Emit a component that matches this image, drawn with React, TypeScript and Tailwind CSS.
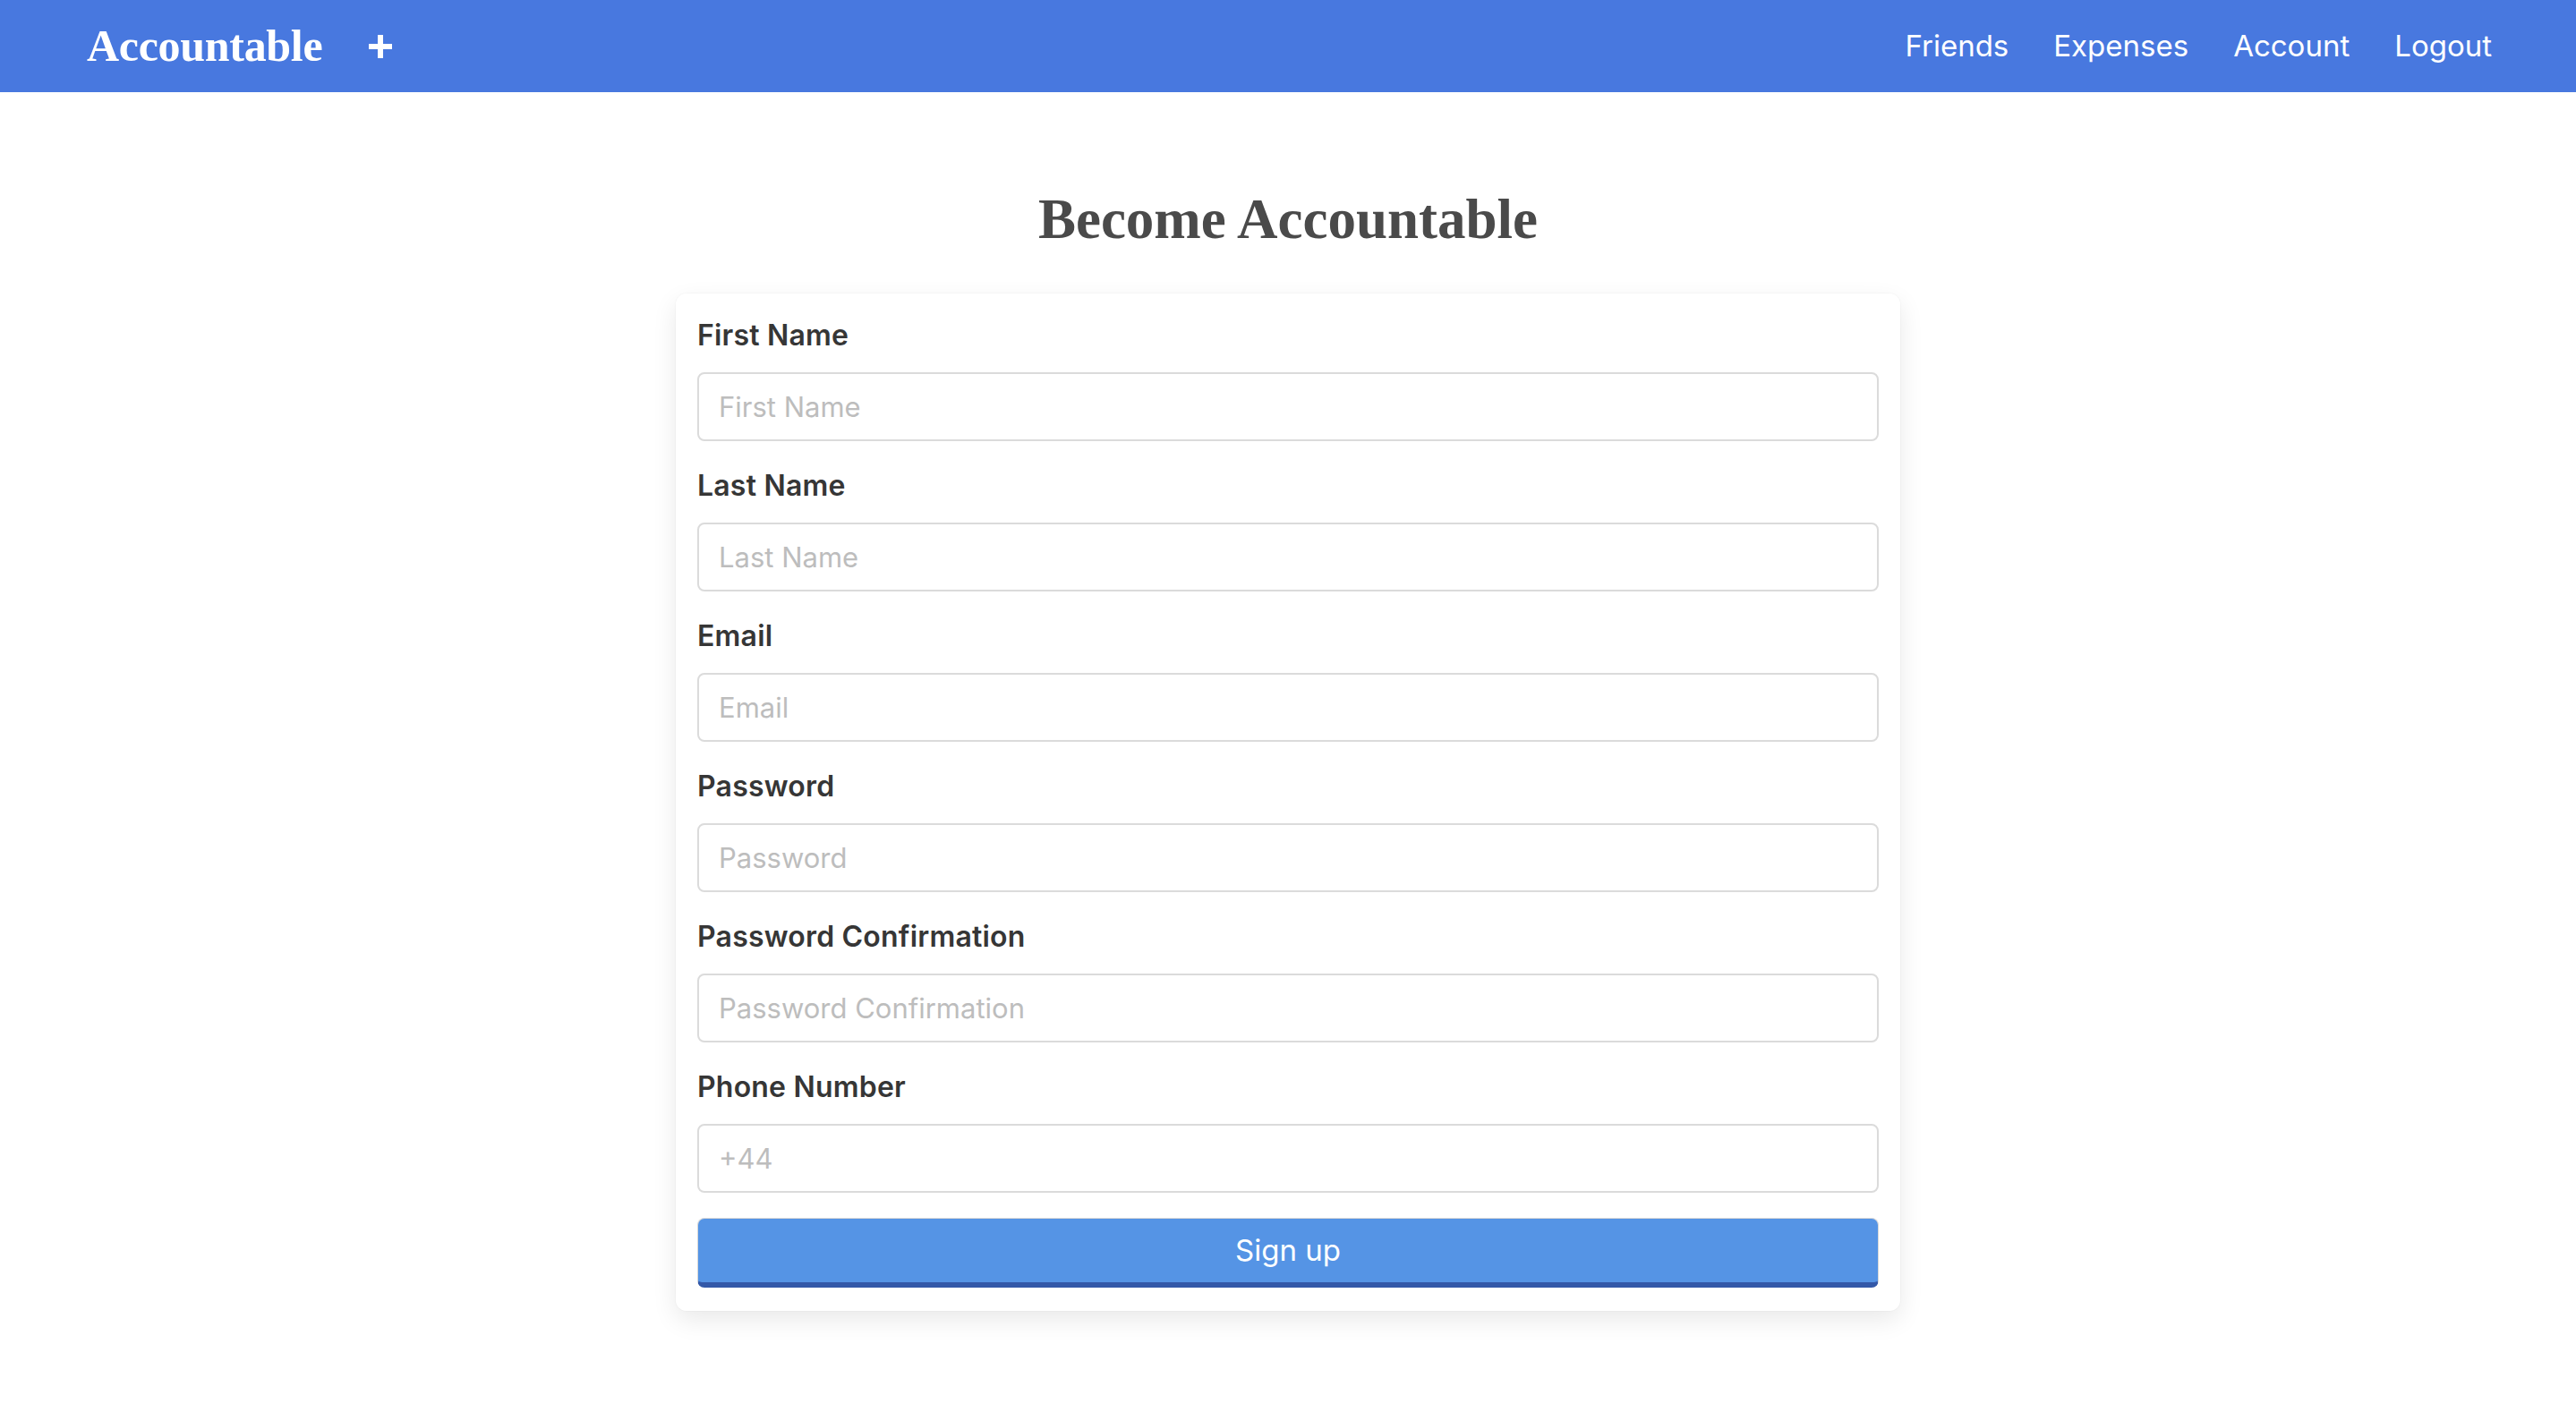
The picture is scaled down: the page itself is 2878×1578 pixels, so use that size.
import React from 'react';

const fields = [
  { label: 'First Name', placeholder: 'First Name', type: 'text' },
  { label: 'Last Name', placeholder: 'Last Name', type: 'text' },
  { label: 'Email', placeholder: 'Email', type: 'email' },
  { label: 'Password', placeholder: 'Password', type: 'password' },
  { label: 'Password Confirmation', placeholder: 'Password Confirmation', type: 'password' },
  { label: 'Phone Number', placeholder: '+44', type: 'tel' },
];

export default function App() {
  return (
    <div className="min-h-screen bg-white font-['Inter',sans-serif]">
      <nav className="h-[103px] bg-[#4878df] flex items-center justify-between pl-[97px] pr-[94px]">
        <div className="flex items-center gap-[50px]">
          <span className="text-white text-[50px] font-bold font-['Liberation_Serif',serif] tracking-[-0.3px]">
            Accountable
          </span>
          <svg width="30" height="30" viewBox="0 0 30 30">
            <path d="M15 2v26M2 15h26" stroke="white" strokeWidth="6" />
          </svg>
        </div>
        <div className="flex items-center gap-[50px] text-white text-[33px]">
          <a href="#">Friends</a>
          <a href="#">Expenses</a>
          <a href="#">Account</a>
          <a href="#">Logout</a>
        </div>
      </nav>

      <div className="flex flex-col items-center pt-[102px]">
        <h1 className="text-[#4a4a4a] text-[63px] leading-[80px] font-bold font-['Liberation_Serif',serif] mb-[43px]">
          Become Accountable
        </h1>

        <form
          onSubmit={(e) => e.preventDefault()}
          className="w-[1368px] bg-white rounded-[12px] shadow-[0_10px_28px_rgba(10,10,10,0.09),0_0_0_1px_rgba(10,10,10,0.02)] px-[24px] pt-[25px] pb-[26px]"
        >
          {fields.map((f) => (
            <div key={f.label} className="mb-[28px]">
              <label className="block text-[#363636] text-[32px] leading-[44px] font-semibold mb-[19px] tracking-[0.2px]">
                {f.label}
              </label>
              <input
                type={f.type}
                placeholder={f.placeholder}
                className="w-full h-[77px] border-2 border-[#dbdbdb] rounded-[8px] px-[22px] text-[31px] text-[#363636] placeholder:text-[#bdbdbd] outline-none"
              />
            </div>
          ))}
          <button
            type="submit"
            className="w-full h-[78px] bg-[#5594e5] text-white text-[33px] rounded-[8px] border border-[#d9d9d9] border-b-[6px] border-b-[#3358a8]"
          >
            Sign up
          </button>
        </form>
      </div>
    </div>
  );
}
